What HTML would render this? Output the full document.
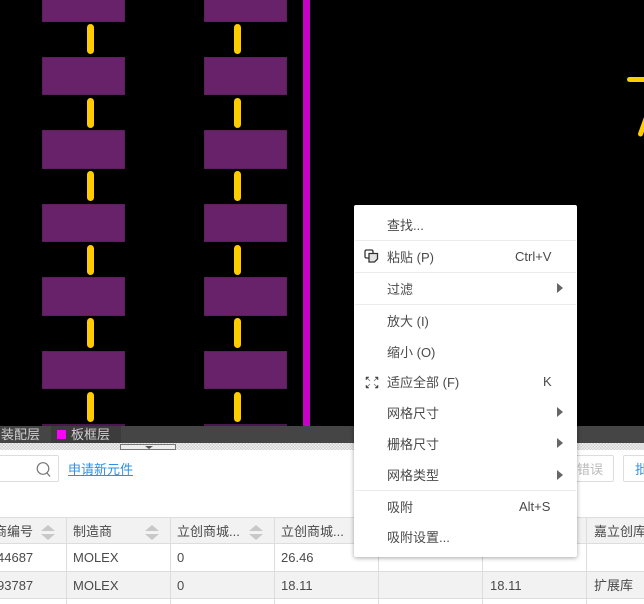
<!DOCTYPE html>
<html><head><meta charset="utf-8">
<style>
html,body{margin:0;padding:0;background:#000}
#r{position:relative;width:644px;height:604px;overflow:hidden;background:#000;font-family:"Liberation Sans","Noto Sans CJK SC",sans-serif;font-size:13px;color:#4a4a4a}
#r div{position:absolute}
.p{background:#68226a;width:83px;height:38px;box-shadow:inset 0 0 0 1px #5c1f5e}
.y{background:#fc0;width:7px;height:30px;border-radius:4px}
.t{white-space:nowrap;line-height:16px}
.m{left:387px;white-space:nowrap;line-height:16px;color:#4a4a4a;font-size:13px}
.k{white-space:nowrap;line-height:16px;color:#4a4a4a;font-size:13px}
.s{left:355px;width:221px;height:1px;background:#ececec}
.a{left:557px;width:0;height:0;border-left:6px solid #666;border-top:5.500px solid transparent;border-bottom:5.500px solid transparent}
.v{width:1px;background:#ddd;top:517px;height:87px}
.h{left:0;width:644px;height:1px;background:#ddd}
.up{width:0;height:0;border-left:7px solid transparent;border-right:7px solid transparent;border-bottom:6px solid #c8c8c8;top:525px}
.dn{width:0;height:0;border-left:7px solid transparent;border-right:7px solid transparent;border-top:6px solid #c8c8c8;top:534px}
</style></head><body><div id="r">

<div class="p" style="left:42px;top:-16px"></div><div class="p" style="left:204px;top:-16px"></div>
<div class="p" style="left:42px;top:57px"></div><div class="p" style="left:204px;top:57px"></div>
<div class="p" style="left:42px;top:130px;height:39px"></div><div class="p" style="left:204px;top:130px;height:39px"></div>
<div class="p" style="left:42px;top:204px"></div><div class="p" style="left:204px;top:204px"></div>
<div class="p" style="left:42px;top:277px;height:39px"></div><div class="p" style="left:204px;top:277px;height:39px"></div>
<div class="p" style="left:42px;top:351px"></div><div class="p" style="left:204px;top:351px"></div>
<div style="left:42px;top:424px;width:83px;height:2px;background:#4a184c"></div><div style="left:204px;top:424px;width:83px;height:2px;background:#4a184c"></div>

<div class="y" style="left:87px;top:24px"></div><div class="y" style="left:234px;top:24px"></div>
<div class="y" style="left:87px;top:98px"></div><div class="y" style="left:234px;top:98px"></div>
<div class="y" style="left:87px;top:171px"></div><div class="y" style="left:234px;top:171px"></div>
<div class="y" style="left:87px;top:245px"></div><div class="y" style="left:234px;top:245px"></div>
<div class="y" style="left:87px;top:318px"></div><div class="y" style="left:234px;top:318px"></div>
<div class="y" style="left:87px;top:392px"></div><div class="y" style="left:234px;top:392px"></div>

<div style="left:303px;top:0;width:7px;height:426px;background:#c800c8"></div>

<div style="left:627px;top:77px;width:17px;height:5px;background:#fc0;border-radius:3px 0 0 3px"></div>
<svg style="position:absolute;left:630px;top:110px" width="14" height="30"><path d="M17 6 L10.500 24" stroke="#fc0" stroke-width="5" stroke-linecap="round"/></svg>

<!-- toolbar -->
<div style="left:0;top:426px;width:644px;height:17px;background:#454545"></div>
<div style="left:51px;top:426px;width:70px;height:17px;background:#3c3c3c"></div>
<div class="t" style="left:1px;top:427px;color:#d0d0d0">装配层</div>
<div style="left:57px;top:430px;width:9px;height:9px;background:#f0f;border:0"></div>
<div class="t" style="left:71px;top:427px;color:#d0d0d0">板框层</div>

<!-- lower panel -->
<div style="left:0;top:443px;width:644px;height:161px;background:#fff"></div>
<div style="left:0;top:443px;width:644px;height:7px;background:repeating-conic-gradient(#d0d0d0 0 25%,#f0f0f0 0 50%) 0 0/3px 3px"></div>
<div style="left:120px;top:444px;width:54px;height:4px;border:1px solid #777;background:#eee"></div>
<div style="left:145px;top:446px;width:0;height:0;border-left:4px solid transparent;border-right:4px solid transparent;border-top:3px solid #555"></div>

<!-- search -->
<div style="left:-4px;top:455px;width:61px;height:25px;border:1px solid #ddd;border-radius:2px;background:#fff"></div>
<svg style="position:absolute;left:36px;top:461px" width="16" height="18"><circle cx="7" cy="7.500" r="5.800" fill="none" stroke="#777" stroke-width="1.200"/><path d="M11 12 L14 15.500" stroke="#777" stroke-width="1.300"/></svg>
<div class="t" style="left:68px;top:462px;color:#2f8fe0;text-decoration:underline">申请新元件</div>

<div style="left:540px;top:455px;width:72px;height:25px;border:1px solid #ddd;border-radius:2px;background:#fff"></div>
<div class="t" style="left:577px;top:462px;color:#bbb">错误</div>
<div style="left:623px;top:455px;width:40px;height:25px;border:1px solid #ddd;border-radius:2px;background:#fff"></div>
<div class="t" style="left:635px;top:462px;color:#2f8fe0">批</div>

<!-- table -->
<div style="left:0;top:517px;width:644px;height:26px;background:#f2f2f2"></div>
<div style="left:0;top:572px;width:644px;height:26px;background:#f2f2f2"></div>
<div class="h" style="top:517px"></div>
<div class="h" style="top:543px"></div>
<div class="h" style="top:571px"></div>
<div class="h" style="top:598px"></div>
<div class="v" style="left:66px"></div><div class="v" style="left:170px"></div><div class="v" style="left:274px"></div><div class="v" style="left:378px"></div><div class="v" style="left:482px"></div><div class="v" style="left:586px"></div>

<div class="t" style="left:-6px;top:524px">商编号</div>
<div class="up" style="left:41px"></div><div class="dn" style="left:41px"></div>
<div class="t" style="left:73px;top:524px">制造商</div>
<div class="up" style="left:145px"></div><div class="dn" style="left:145px"></div>
<div class="t" style="left:177px;top:524px">立创商城...</div>
<div class="up" style="left:249px"></div><div class="dn" style="left:249px"></div>
<div class="t" style="left:281px;top:524px">立创商城...</div>
<div class="t" style="left:594px;top:524px">嘉立创库</div>

<div class="t" style="left:-3px;top:550px">44687</div>
<div class="t" style="left:73px;top:550px">MOLEX</div>
<div class="t" style="left:177px;top:550px">0</div>
<div class="t" style="left:281px;top:550px">26.46</div>

<div class="t" style="left:-3px;top:578px">93787</div>
<div class="t" style="left:73px;top:578px">MOLEX</div>
<div class="t" style="left:177px;top:578px">0</div>
<div class="t" style="left:281px;top:578px">18.11</div>
<div class="t" style="left:490px;top:578px">18.11</div>
<div class="t" style="left:594px;top:578px">扩展库</div>

<!-- menu -->
<div style="left:354px;top:205px;width:223px;height:352px;background:#fff;border-radius:2px;box-shadow:0 1px 5px rgba(0,0,0,.35)"></div>
<div class="s" style="top:240px"></div>
<div class="s" style="top:272px"></div>
<div class="s" style="top:304px"></div>
<div class="s" style="top:490px"></div>

<div class="m" style="top:218px">查找...</div>
<div class="m" style="top:250px">粘贴 (P)</div>
<div class="k" style="left:515px;top:249px">Ctrl+V</div>
<div class="m" style="top:282px">过滤</div>
<div class="a" style="top:283px"></div>
<div class="m" style="top:314px">放大 (I)</div>
<div class="m" style="top:345px">缩小 (O)</div>
<div class="m" style="top:375px">适应全部 (F)</div>
<div class="k" style="left:543px;top:374px">K</div>
<div class="m" style="top:406px">网格尺寸</div>
<div class="a" style="top:407px"></div>
<div class="m" style="top:437px">栅格尺寸</div>
<div class="a" style="top:438px"></div>
<div class="m" style="top:468px">网格类型</div>
<div class="a" style="top:470px"></div>
<div class="m" style="top:500px">吸附</div>
<div class="k" style="left:519px;top:499px">Alt+S</div>
<div class="m" style="top:530px">吸附设置...</div>

<svg style="position:absolute;left:364px;top:249px" width="15" height="14"><path d="M5 9H2.500Q1 9 1 7.500V2.500Q1 1 2.500 1H7.500Q9 1 9 2.500V4.500" fill="none" stroke="#333" stroke-width="1.300"/><path d="M5 4.500H13.500V10L10.500 13H5Z" fill="#e4e4e4" stroke="#333" stroke-width="1.300"/></svg>
<svg style="position:absolute;left:365px;top:376px" width="14" height="13"><path d="M1 1H4L1 4ZM13 1H10L13 4ZM1 12H4L1 9ZM13 12H10L13 9Z" fill="#444" stroke="#444" stroke-width=".5"/><path d="M2 2L5 5M12 2L9 5M2 11L5 8M12 11L9 8" stroke="#777" stroke-width=".8"/></svg>

</div></body></html>
